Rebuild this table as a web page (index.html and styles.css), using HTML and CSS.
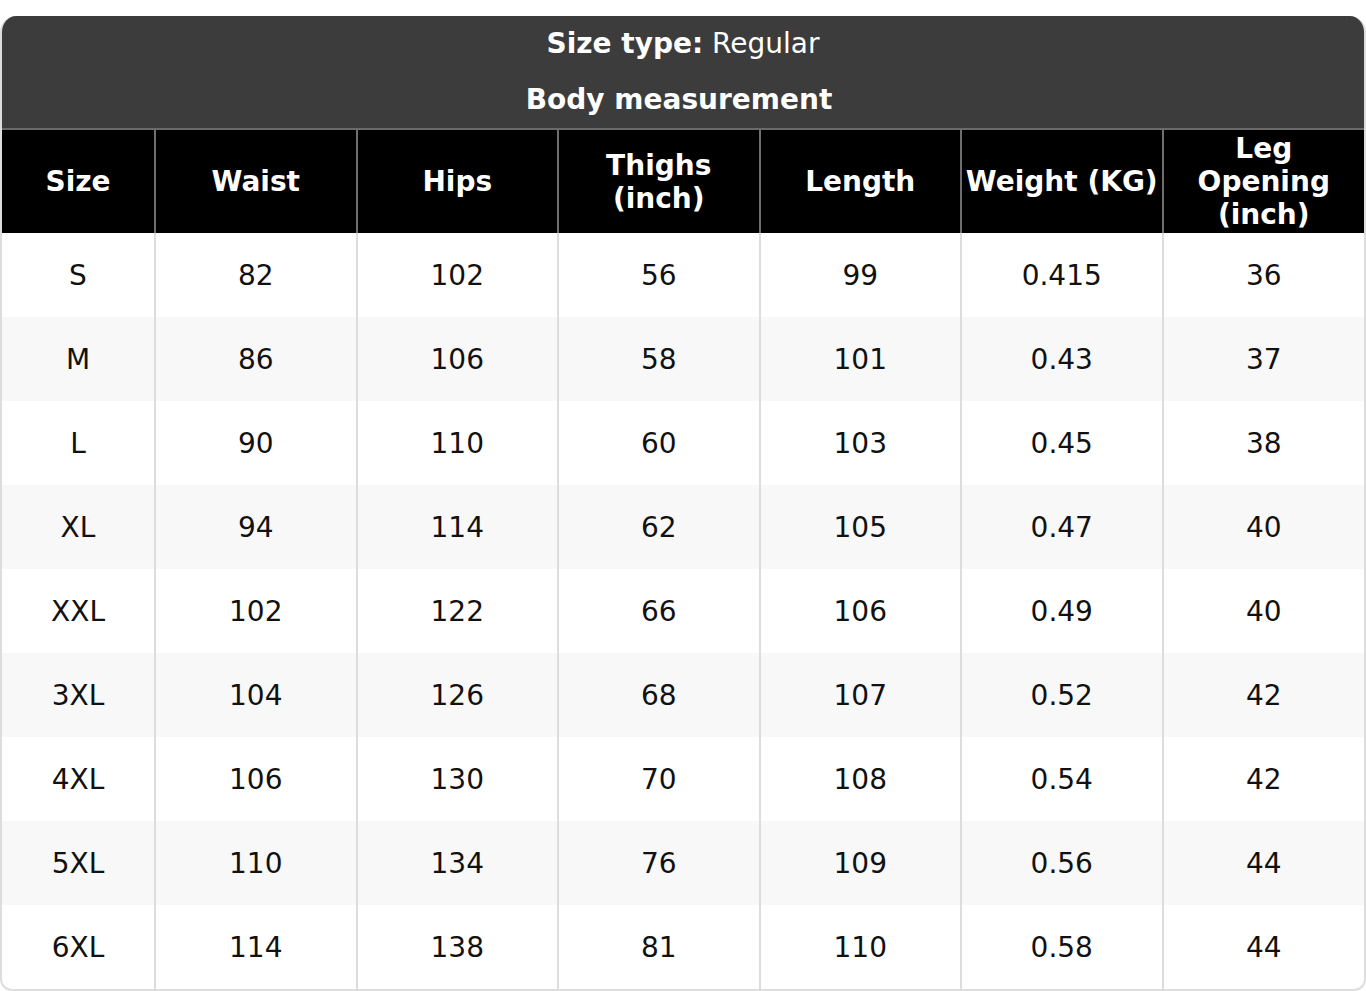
FILE: index.html
```html
<!DOCTYPE html>
<html>
<head>
<meta charset="utf-8">
<link rel="stylesheet" href="styles.css">
</head>
<body>
<div class="chart">
  <div class="caption">
    <div class="caption-line"><b>Size type:</b> Regular</div>
    <div class="caption-line caption-title"><b>Body measurement</b></div>
  </div>
  <table class="sizes">
    <colgroup>
      <col class="c-size"><col class="c-n"><col class="c-n"><col class="c-n"><col class="c-n"><col class="c-n"><col class="c-n">
    </colgroup>
    <thead>
      <tr>
        <th>Size</th><th>Waist</th><th>Hips</th><th>Thighs<br>(inch)</th><th>Length</th><th>Weight (KG)</th><th>Leg<br>Opening<br>(inch)</th>
      </tr>
    </thead>
    <tbody>
      <tr><td>S</td><td>82</td><td>102</td><td>56</td><td>99</td><td>0.415</td><td>36</td></tr>
      <tr><td>M</td><td>86</td><td>106</td><td>58</td><td>101</td><td>0.43</td><td>37</td></tr>
      <tr><td>L</td><td>90</td><td>110</td><td>60</td><td>103</td><td>0.45</td><td>38</td></tr>
      <tr><td>XL</td><td>94</td><td>114</td><td>62</td><td>105</td><td>0.47</td><td>40</td></tr>
      <tr><td>XXL</td><td>102</td><td>122</td><td>66</td><td>106</td><td>0.49</td><td>40</td></tr>
      <tr><td>3XL</td><td>104</td><td>126</td><td>68</td><td>107</td><td>0.52</td><td>42</td></tr>
      <tr><td>4XL</td><td>106</td><td>130</td><td>70</td><td>108</td><td>0.54</td><td>42</td></tr>
      <tr><td>5XL</td><td>110</td><td>134</td><td>76</td><td>109</td><td>0.56</td><td>44</td></tr>
      <tr><td>6XL</td><td>114</td><td>138</td><td>81</td><td>110</td><td>0.58</td><td>44</td></tr>
    </tbody>
  </table>
</div>
</body>
</html>
```
FILE: styles.css
```css
html, body {
  margin: 0;
  padding: 0;
  background: #ffffff;
}
body {
  padding-top: 16px;
  font-family: "DejaVu Sans", sans-serif;
  font-size: 28px;
  color: #111111;
}
.chart {
  border: 2px solid #dddddd;
  border-top: none;
  border-radius: 16px 16px 12px 12px;
  overflow: hidden;
}
.caption {
  background: #3c3c3c;
  color: #ffffff;
  text-align: center;
  border-bottom: 2px solid #6a6a6a;
}
.caption-line {
  height: 56px;
  line-height: 56px;
}
.caption-title {
  padding-right: 8px;
}
.caption-line b {
  font-weight: bold;
}
.sizes {
  width: 100%;
  border-collapse: collapse;
  table-layout: fixed;
}
.c-size { width: 153px; }
.sizes th {
  background: #000000;
  color: #ffffff;
  font-weight: bold;
  line-height: 33px;
  height: 103px;
  padding: 0;
  text-align: center;
  vertical-align: middle;
  border-left: 2px solid #6e6e6e;
}
.sizes td {
  height: 84px;
  padding: 0;
  line-height: 33px;
  text-align: center;
  vertical-align: middle;
  border-left: 2px solid #dddddd;
}
.sizes th:first-child,
.sizes td:first-child {
  border-left: none;
}
.sizes tbody tr:nth-child(even) td {
  background: #f8f8f8;
}
```
